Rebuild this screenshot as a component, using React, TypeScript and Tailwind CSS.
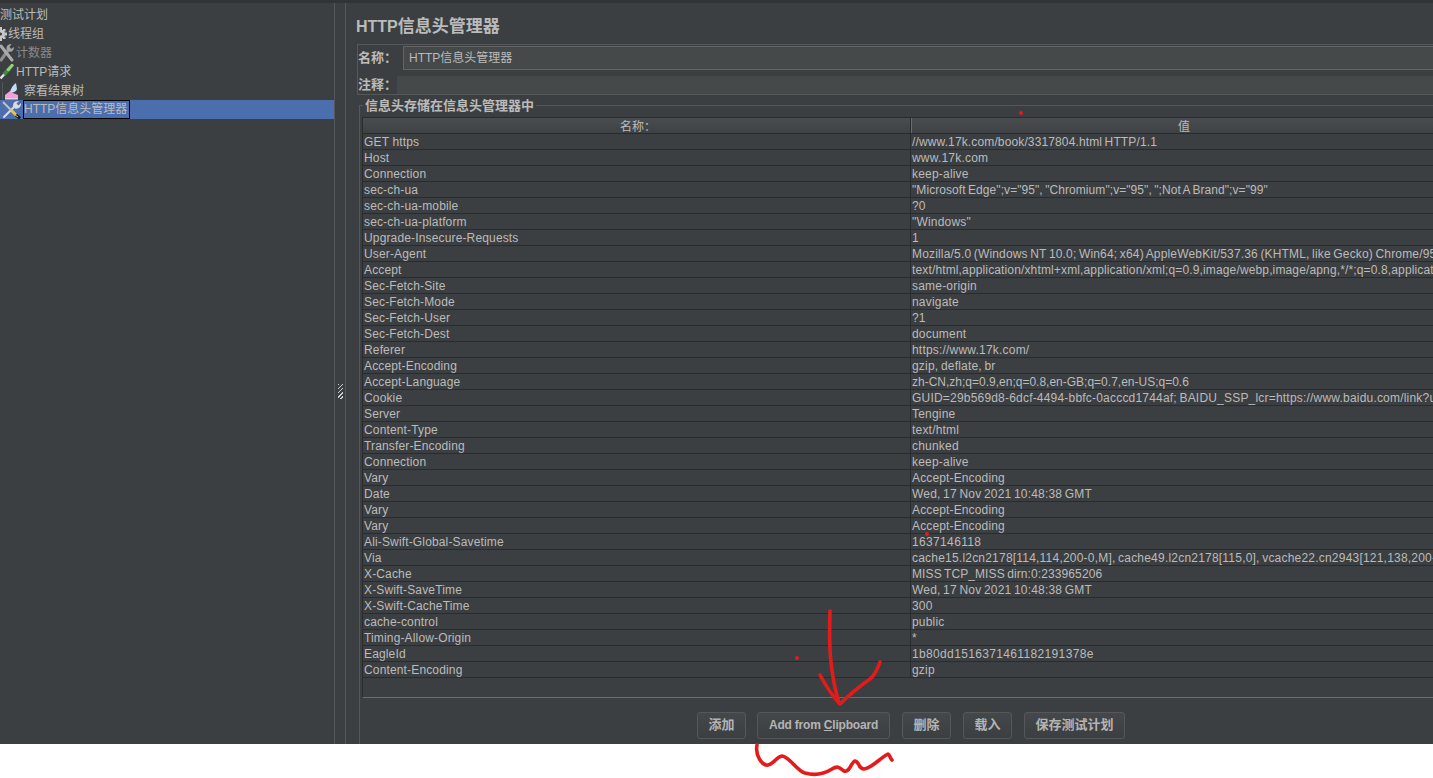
const rows: [string, string, string?][] = [
  ["GET https", "//www.17k.com/book/3317804.html HTTP/1.1", "tracking-[0.13px]"],
  ["Host", "www.17k.com"],
  ["Connection", "keep-alive"],
  ["sec-ch-ua", "\"Microsoft Edge\";v=\"95\", \"Chromium\";v=\"95\", \";Not A Brand\";v=\"99\"", "tracking-[0.07px]"],
  ["sec-ch-ua-mobile", "?0"],
  ["sec-ch-ua-platform", "\"Windows\""],
  ["Upgrade-Insecure-Requests", "1"],
  ["User-Agent", "Mozilla/5.0 (Windows NT 10.0; Win64; x64) AppleWebKit/537.36 (KHTML, like Gecko) Chrome/95.0.4638.69 Safari/537.36", "tracking-[0.17px]"],
  ["Accept", "text/html,application/xhtml+xml,application/xml;q=0.9,image/webp,image/apng,*/*;q=0.8,application/signed-exchange", "tracking-[0.14px]"],
  ["Sec-Fetch-Site", "same-origin"],
  ["Sec-Fetch-Mode", "navigate"],
  ["Sec-Fetch-User", "?1"],
  ["Sec-Fetch-Dest", "document"],
  ["Referer", "https://www.17k.com/"],
  ["Accept-Encoding", "gzip, deflate, br"],
  ["Accept-Language", "zh-CN,zh;q=0.9,en;q=0.8,en-GB;q=0.7,en-US;q=0.6", "tracking-[0px]"],
  ["Cookie", "GUID=29b569d8-6dcf-4494-bbfc-0acccd1744af; BAIDU_SSP_lcr=https://www.baidu.com/link?url=abcdef", "tracking-[0.2px]"],
  ["Server", "Tengine"],
  ["Content-Type", "text/html"],
  ["Transfer-Encoding", "chunked"],
  ["Connection", "keep-alive"],
  ["Vary", "Accept-Encoding", "tracking-[0.14px]"],
  ["Date", "Wed, 17 Nov 2021 10:48:38 GMT"],
  ["Vary", "Accept-Encoding", "tracking-[0.14px]"],
  ["Vary", "Accept-Encoding", "tracking-[0.14px]"],
  ["Ali-Swift-Global-Savetime", "1637146118", "tracking-[0.35px]"],
  ["Via", "cache15.l2cn2178[114,114,200-0,M], cache49.l2cn2178[115,0], vcache22.cn2943[121,138,200-0,M], vcache40.cn2943", "tracking-[0.21px]"],
  ["X-Cache", "MISS TCP_MISS dirn:0:233965206", "tracking-[0.1px]"],
  ["X-Swift-SaveTime", "Wed, 17 Nov 2021 10:48:38 GMT"],
  ["X-Swift-CacheTime", "300"],
  ["cache-control", "public"],
  ["Timing-Allow-Origin", "*"],
  ["EagleId", "1b80dd1516371461182191378e", "tracking-[0.35px]"],
  ["Content-Encoding", "gzip"],
];

const FONT = "font-['Liberation_Sans','Noto_Sans_CJK_SC',sans-serif]";

function Gear() {
  return (
    <svg width="8" height="16" viewBox="0 0 8 16" className="shrink-0">
      <g fill="#c8c8c8">
        <circle cx="0.5" cy="8" r="4.6" />
        <rect x="-1" y="1" width="3" height="3" />
        <rect x="-1" y="12" width="3" height="3" />
        <rect x="4" y="6.5" width="3" height="3" />
        <rect x="3" y="3" width="2.5" height="2.5" />
        <rect x="3" y="10.5" width="2.5" height="2.5" />
      </g>
      <circle cx="0.5" cy="8" r="1.6" fill="#3c3f41" />
    </svg>
  );
}

function Wrench() {
  return (
    <svg width="14" height="18" viewBox="0 0 14 18" className="shrink-0">
      <path d="M1 16 L9 5" stroke="#8f8f8f" strokeWidth="3.2" strokeLinecap="round" />
      <path d="M7 6 C5.5 2.5 8 0 11.5 0 L9.5 3 L11 5 L14 3 C14 6.5 11.5 8.5 9 7.5 Z" fill="#a3a3a3" />
      <path d="M1 2 L12 16" stroke="#ababab" strokeWidth="3" strokeLinecap="round" />
    </svg>
  );
}

function Pipette() {
  return (
    <svg width="14" height="16" viewBox="0 0 14 16" className="shrink-0">
      <path d="M0.5 14.5 L4.5 10" stroke="#e4e4e4" strokeWidth="2.4" />
      <path d="M4 10.5 L9 5" stroke="#3f8a3c" strokeWidth="4" />
      <path d="M8.5 5.5 L12 1.5" stroke="#8fd36f" strokeWidth="3.4" strokeLinecap="round" />
    </svg>
  );
}

function ChartIcon() {
  return (
    <svg width="18" height="18" viewBox="0 0 18 18" className="shrink-0">
      <path d="M1.5 0 V17" stroke="#55585a" strokeWidth="1" />
      <path d="M4 17 L4 13 L9 9 L12 11 L17 13 V17 Z" fill="#f2a0d8" />
      <path d="M9 10 C10 6 12 3 15 1 L16 7 C15 10 12 11 9 10 Z" fill="#c5dcf5" />
      <path d="M4 17 H17" stroke="#f0f0f0" strokeWidth="1" />
    </svg>
  );
}

function Tools() {
  return (
    <svg width="22" height="19" viewBox="0 0 22 19" className="shrink-0">
      <path d="M3 17 L14 6" stroke="#d8d8d8" strokeWidth="2.2" strokeLinecap="round" />
      <path d="M12.5 7 C11 3.5 14 0.5 18 1 L15.5 3.5 L17.5 5.5 L20 3 C20.5 7 17 9.5 14 8.5 Z" fill="#dcdcdc" />
      <path d="M2 2 L11 11" stroke="#c4c4c4" strokeWidth="1.8" />
      <path d="M10.5 10.5 L15 15" stroke="#f4c430" strokeWidth="3" />
      <path d="M15 15 L19 18.5" stroke="#1c1c1c" strokeWidth="3" />
      <path d="M13 14 L17 17" stroke="#f4c430" strokeWidth="1" />
    </svg>
  );
}

function TreeRow({ pad, icon, children, dim }: { pad: string; icon?: React.ReactNode; children: React.ReactNode; dim?: boolean }) {
  return (
    <div className={`h-[19px] flex items-center whitespace-nowrap ${pad} ${dim ? "text-[#8a8a8a]" : "text-[#bbbbbb]"}`}>
      {icon}
      {children}
    </div>
  );
}

function Button({ w, children, extra }: { w: string; children: React.ReactNode; extra?: string }) {
  return (
    <div className={`${w} ${extra ?? ""} h-[27px] pb-[2px] flex items-center justify-center rounded-[3px] border border-[#555759] bg-gradient-to-b from-[#45484a] to-[#3c3f41] text-[13px] font-bold text-[#b4b4b4]`}>
      {children}
    </div>
  );
}

export default function App() {
  return (
    <div className={`relative w-[1433px] h-[778px] overflow-hidden bg-white text-[12px] ${FONT}`}>
      <div className="h-[744px] flex flex-col bg-[#3c3f41] overflow-hidden">
        <div className="h-[3px] shrink-0 bg-[#313335]" />
        <div className="flex flex-1 min-h-0">
          {/* Tree */}
          <div className="w-[335px] shrink-0 border-r border-[#55585a] pt-[2px] overflow-hidden text-[12px]">
            <TreeRow pad="pl-0">测试计划</TreeRow>
            <TreeRow pad="pl-0" icon={<Gear />}>线程组</TreeRow>
            <TreeRow pad="pl-0" dim icon={<span className="mr-[2px]"><Wrench /></span>}>计数器</TreeRow>
            <TreeRow pad="pl-0" icon={<span className="mr-[2px]"><Pipette /></span>}>HTTP请求</TreeRow>
            <TreeRow pad="pl-[1px]" icon={<span className="mr-[5px]"><ChartIcon /></span>}>察看结果树</TreeRow>
            <div className="h-[19px] bg-[#4b6eaf] flex items-center">
              <span className="ml-[1px]"><Tools /></span>
              <span className="h-[19px] w-[107px] border border-black leading-[17px] text-[#bbbbbb] whitespace-nowrap">HTTP信息头管理器</span>
            </div>
          </div>

          {/* Splitter */}
          <div className="w-[11px] shrink-0 flex items-center pl-[3px] pt-[36px] bg-[#3c3f41] border-r border-[#55585a]">
            <div className="w-[5px] h-[15px] bg-[repeating-linear-gradient(135deg,#d0d0d0_0,#d0d0d0_1px,#3c3f41_1px,#3c3f41_3px)]" />
          </div>

          {/* Right panel */}
          <div className="w-[1132px] shrink-0 pl-[11px] flex flex-col">
            <div className="h-[41px] pt-[10px] -ml-[1px] text-[17px] font-bold text-[#bbbbbb] leading-[28px] whitespace-nowrap">
              <span className="text-[16px]">HTTP</span>信息头管理器
            </div>
            <div className="h-[51px] border border-[#55585a] border-r-0 flex flex-col">
              <div className="h-[31px] pt-[1px] flex items-start">
                <span className="w-[45px] text-[13px] leading-[24px] font-bold text-[#bbbbbb] shrink-0 whitespace-nowrap">名称：</span>
                <div className="flex-1 h-[24px] border border-[#646464] bg-[#45494a] pl-[5px] leading-[22px] text-[#bbbbbb]">HTTP信息头管理器</div>
              </div>
              <div className="flex items-start h-[18px]">
                <span className="w-[39px] text-[13px] leading-[18px] font-bold text-[#bbbbbb] shrink-0 whitespace-nowrap">注释：</span>
                <div className="flex-1 h-[18px] bg-[#45494a]" />
              </div>
            </div>

            {/* Group */}
            <div className="relative mt-[10px] ml-[2px] flex-1 min-h-0 border border-[#55585a] border-r-0 border-b-0 pt-[11px] pl-[2px] flex flex-col">
              <span className="absolute -top-[7px] left-[3px] bg-[#3c3f41] px-[2px] text-[13px] font-bold text-[#bbbbbb] leading-[14px] whitespace-nowrap">信息头存储在信息头管理器中</span>
              <div className="h-[581px] shrink-0 border-b border-l border-b-[#6a6d6f] border-l-[#2b2b2b] overflow-hidden">
                <div className="flex h-[17px] border-y border-[#2b2b2b] bg-gradient-to-b from-[#4a4d4f] to-[#3f4244] text-[#bbbbbb]">
                  <div className="w-[548px] shrink-0 pr-[-2px] pl-[3px] text-center leading-[19px] border-r border-[#2b2b2b]">名称：</div>
                  <div className="flex-1 pr-[22px] text-center leading-[19px] border-l border-[#6a6d6f]">值</div>
                </div>
                {rows.map(([k, v, t], i) => (
                  <div key={i} className="flex h-[16px] border-b border-[#2b2b2b] text-[#bbbbbb] leading-[16px]">
                    <div className="w-[548px] shrink-0 pl-[1px] border-r border-[#2b2b2b] whitespace-nowrap overflow-hidden tracking-[0.15px]">{k}</div>
                    <div className={`flex-1 pl-[1px] whitespace-nowrap overflow-hidden [word-spacing:-1px] ${t ?? "tracking-[0.2px]"}`}>{v}</div>
                  </div>
                ))}
              </div>
              <div className="pl-[335px] pt-[14px] flex gap-[12px]">
                <Button w="w-[49px]" extra="-mr-[1px]">添加</Button>
                <Button w="w-[133px]"><span className="text-[12px] tracking-[-0.2px]">Add from <span className="underline">C</span>lipboard</span></Button>
                <Button w="w-[49px]">删除</Button>
                <Button w="w-[49px]">载入</Button>
                <Button w="w-[101px]">保存测试计划</Button>
              </div>
            </div>
          </div>
        </div>
      </div>

      {/* Hand-drawn annotations */}
      <svg className="absolute left-0 top-0 pointer-events-none" width="1433" height="778" viewBox="0 0 1433 778" fill="none">
        <g stroke="#e31b1b" strokeWidth="3.6" strokeLinecap="round" strokeLinejoin="round">
          <path d="M830 611 C829 640 829 670 839 703" />
          <path d="M820 675 C826 686 832 696 840 704 C850 694 860 686 870 679 C875 675 878 668 880 662" />
          <path d="M757 745 C755 755 762 766 768 765 C774 764 776 757 782 756 C790 757 796 770 805 773 C815 776 824 774 832 769 C838 765 840 768 844 771 C850 773 851 762 855 761 C860 762 858 769 864 769 C872 768 880 758 888 754 C890 755 890 758 892 760" />
        </g>
        <g fill="#e31b1b">
          <circle cx="1021" cy="113" r="2" />
          <circle cx="797" cy="658" r="2" />
          <circle cx="927" cy="534" r="2" />
        </g>
      </svg>
    </div>
  );
}
